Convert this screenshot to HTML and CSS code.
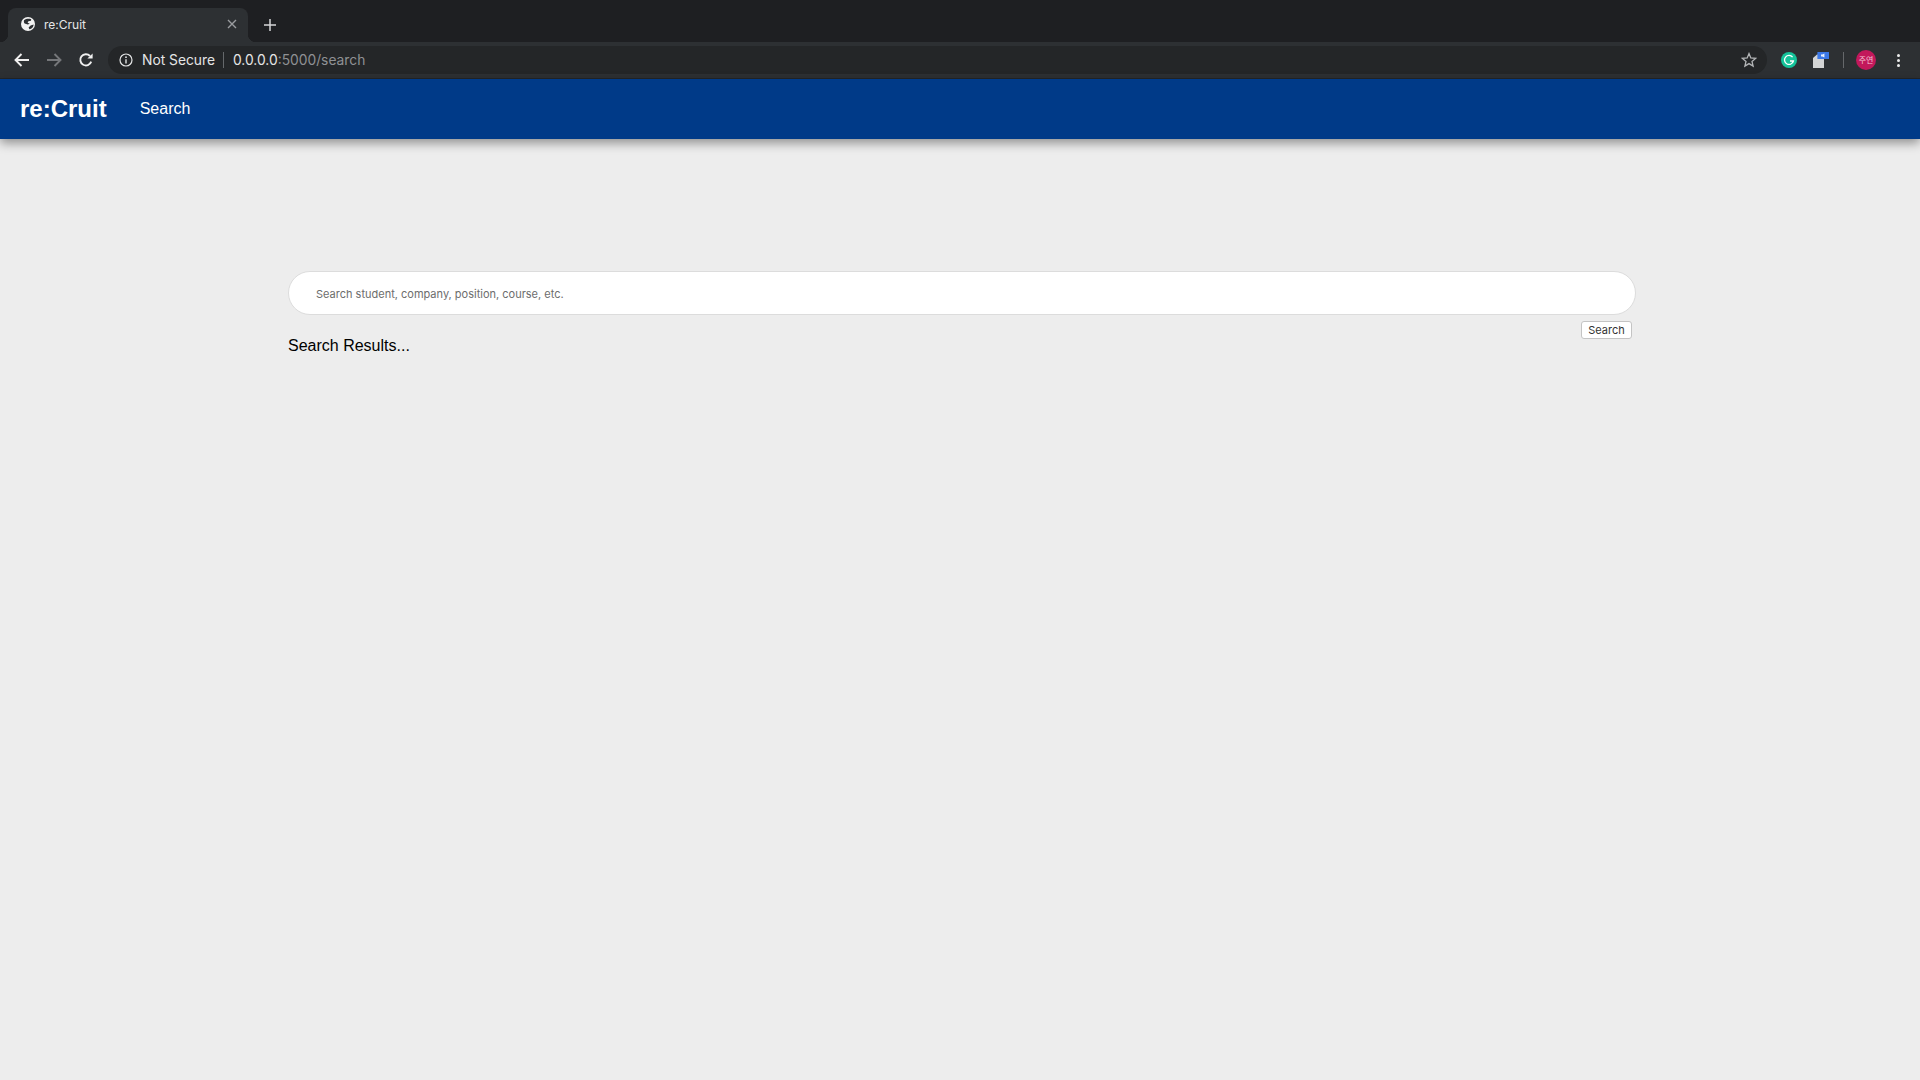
FILE: index.html
```html
<!DOCTYPE html>
<html lang="en">
<head>
<meta charset="utf-8">
<title>re:Cruit</title>
<link rel="stylesheet" href="styles.css">
</head>
<body>
<header class="chrome">
  <div class="tabstrip">
    <div class="tab">
      <svg class="favicon" viewBox="0 0 14 14" width="14" height="14"><circle cx="7" cy="7" r="7" fill="#f2f2f2"/><path d="M3.2 3 C5 1.6 8 1.4 10.2 2.2 L10 3.8 L7.4 4.2 L6.6 5.8 L8.8 6.8 L6.8 7.6 L3.6 6.6 C2.8 5.4 2.6 4 3.2 3 Z M9.6 8.4 L12.6 7.4 C12.6 9 11.6 10.8 10 11.8 L8.4 12.2 L7.6 10.6 Z" fill="#2d3033"/></svg>
      <span class="tab-title">re:Cruit</span>
      <svg class="tab-close" viewBox="0 0 10 10" width="10" height="10"><path d="M1 1 L9 9 M9 1 L1 9" stroke="#9a9c9f" stroke-width="1.4"/></svg>
    </div>
    <svg class="newtab" viewBox="0 0 12 12" width="12" height="12"><path d="M6 0 V12 M0 6 H12" stroke="#d5d6d7" stroke-width="1.5"/></svg>
  </div>
  <div class="toolbar">
    <svg class="tool back" viewBox="0 0 16 14" width="16" height="14"><path d="M15 7 H2 M7.5 1 L1.5 7 L7.5 13" fill="none" stroke="#f0f0f0" stroke-width="1.9"/></svg>
    <svg class="tool forward" viewBox="0 0 16 14" width="16" height="14"><path d="M1 7 H14 M8.5 1 L14.5 7 L8.5 13" fill="none" stroke="#75777a" stroke-width="1.9"/></svg>
    <svg class="tool reload" viewBox="0 0 16 16" width="16" height="16"><path d="M13.2 9.6 A5.6 5.6 0 1 1 12 4" fill="none" stroke="#f0f0f0" stroke-width="1.9"/><path d="M14.6 1.4 V6.6 H9.4 Z" fill="#f0f0f0"/></svg>
    <div class="omnibox">
      <svg class="info" viewBox="0 0 14 14" width="14" height="14"><circle cx="7" cy="7" r="6" fill="none" stroke="#e4e5e6" stroke-width="1.2"/><path d="M7 6.2 V10.4" stroke="#e4e5e6" stroke-width="1.4"/><circle cx="7" cy="4.2" r="0.9" fill="#e4e5e6"/></svg>
      <span class="secure">Not Secure</span>
      <span class="omni-sep"></span>
      <span class="url">0.0.0.0<span class="url-dim">:5000/search</span></span>
      <svg class="star" viewBox="0 0 16 16" width="16" height="16"><path d="M8 1.6 L9.8 6 L14.6 6.4 L11 9.4 L12.1 14.1 L8 11.6 L3.9 14.1 L5 9.4 L1.4 6.4 L6.2 6 Z" fill="none" stroke="#b4b6b8" stroke-width="1.3"/></svg>
    </div>
    <svg class="ext-g" viewBox="0 0 16 16" width="16" height="16"><circle cx="8" cy="8" r="8" fill="#15c39a"/><path d="M11.6 5.2 A4.5 4.5 0 1 0 12.4 9 H9" fill="none" stroke="#fff" stroke-width="1.3"/></svg>
    <svg class="ext-doc" viewBox="0 0 16 16" width="16" height="16"><path d="M0 6 L4 2.6 H11 V16 H0 Z" fill="#d3d4d5"/><rect x="4.4" y="0" width="11.6" height="7" fill="#3b78e7"/><path d="M8 2.6 H9.4 L11.4 1.4 V5.6 L9.4 4.4 H8 Z" fill="#e8f0fe"/></svg>
    <span class="tool-sep"></span>
    <span class="avatar">주연</span>
    <span class="menu-dots"><i></i><i></i><i></i></span>
  </div>
</header>
<nav class="navbar">
  <a class="brand">re:Cruit</a>
  <a class="nav-link">Search</a>
</nav>
<main class="content">
  <input class="search-input" type="text" placeholder="Search student, company, position, course, etc.">
  <div class="actions"><button class="search-btn" type="button">Search</button></div>
  <h2 class="results">Search Results...</h2>
</main>
</body>
</html>
```
FILE: styles.css
```css
* { box-sizing: border-box; }
html, body { margin: 0; height: 100%; }
body {
  background: #ededed;
  font-family: "Liberation Sans", Arial, sans-serif;
  overflow: hidden;
}
.chrome { display: flex; flex-direction: column; }
.tabstrip {
  height: 42px;
  background: #1e1f22;
  display: flex;
  align-items: flex-end;
  padding-left: 8px;
}
.tab {
  position: relative;
  width: 240px;
  height: 34px;
  background: #2d3033;
  border-radius: 8px 8px 0 0;
  display: flex;
  align-items: center;
  padding: 0 11px 2px 13px;
}
.tab::before,
.tab::after {
  content: "";
  position: absolute;
  bottom: 0;
  width: 8px;
  height: 8px;
}
.tab::before {
  left: -8px;
  background: radial-gradient(circle at 0 0, #1e1f22 8px, #2d3033 8.5px);
}
.tab::after {
  right: -8px;
  background: radial-gradient(circle at 100% 0, #1e1f22 8px, #2d3033 8.5px);
}
.favicon { flex: none; }
.tab-title {
  margin-left: 9px;
  flex: 1;
  color: #e6e7e8;
  font: 12px "Inter", "Liberation Sans", sans-serif;
}
.tab-close { flex: none; }
.newtab { margin: 0 0 11px 16px; }
.toolbar {
  height: 37px;
  background: #2d3033;
  display: flex;
  align-items: center;
  padding: 0 0 0 14px;
  border-bottom: 1px solid #232528;
}
.tool { flex: none; }
.forward { margin-left: 16px; }
.reload { margin-left: 16px; }
.omnibox {
  margin-left: 14px;
  width: 1659px;
  height: 28px;
  background: #242628;
  border-radius: 14px;
  display: flex;
  align-items: center;
  padding: 0 10px 0 11px;
  font: 13.8px "Inter", "Liberation Sans", sans-serif;
}
.info { flex: none; }
.secure { margin-left: 9px; color: #e4e5e6; }
.omni-sep { width: 1px; height: 16px; background: #65686b; margin: 0 9px 0 8px; }
.url { color: #e4e5e6; flex: 1; }
.url-dim { color: #8f9194; }
.star { flex: none; }
.ext-g { flex: none; margin-left: 14px; }
.ext-doc { flex: none; margin-left: 16px; }
.tool-sep { flex: none; width: 1px; height: 16px; background: #65686b; margin-left: 14px; }
.avatar {
  flex: none;
  width: 20px;
  height: 20px;
  margin-left: 12px;
  border-radius: 50%;
  background: #c2185b;
  color: #f3c4d6;
  font: 8px/20px "Noto Sans CJK KR", sans-serif;
  text-align: center;
}
.menu-dots {
  flex: none;
  margin-left: 21px;
  display: flex;
  flex-direction: column;
  gap: 2px;
}
.menu-dots i { width: 3px; height: 3px; background: #eceded; border-radius: 50%; }
.navbar {
  height: 60px;
  background: #003a88;
  display: flex;
  align-items: center;
  padding-left: 20px;
  box-shadow: 0 4px 10px rgba(0, 0, 0, 0.4);
  position: relative;
}
.brand { color: #fff; font-size: 24px; font-weight: 700; }
.nav-link { color: #fff; font-size: 16px; margin-left: 33px; }
.content {
  width: 1348px;
  margin: 132px 0 0 288px;
  display: flex;
  flex-direction: column;
}
.search-input {
  width: 100%;
  height: 44px;
  border: 1px solid #dcdcdc;
  border-radius: 22px;
  background: #fff;
  padding: 1px 27px 0;
  font: 11px "Inter", "Liberation Sans", sans-serif;
  outline: none;
}
.search-input::placeholder { color: #6d6d6d; opacity: 1; }
.actions { display: flex; justify-content: flex-end; padding-right: 4px; margin-top: 6px; height: 18px; }
.search-btn {
  width: 51px;
  height: 18px;
  padding: 0;
  background: #fff;
  border: 1px solid #c4c4c4;
  border-radius: 3px;
  color: #333;
  font: 11px "Inter", "Liberation Sans", sans-serif;
}
.results {
  margin: -3px 0 0;
  font-size: 16px;
  line-height: 20px;
  font-weight: 400;
  color: #000;
}
```
